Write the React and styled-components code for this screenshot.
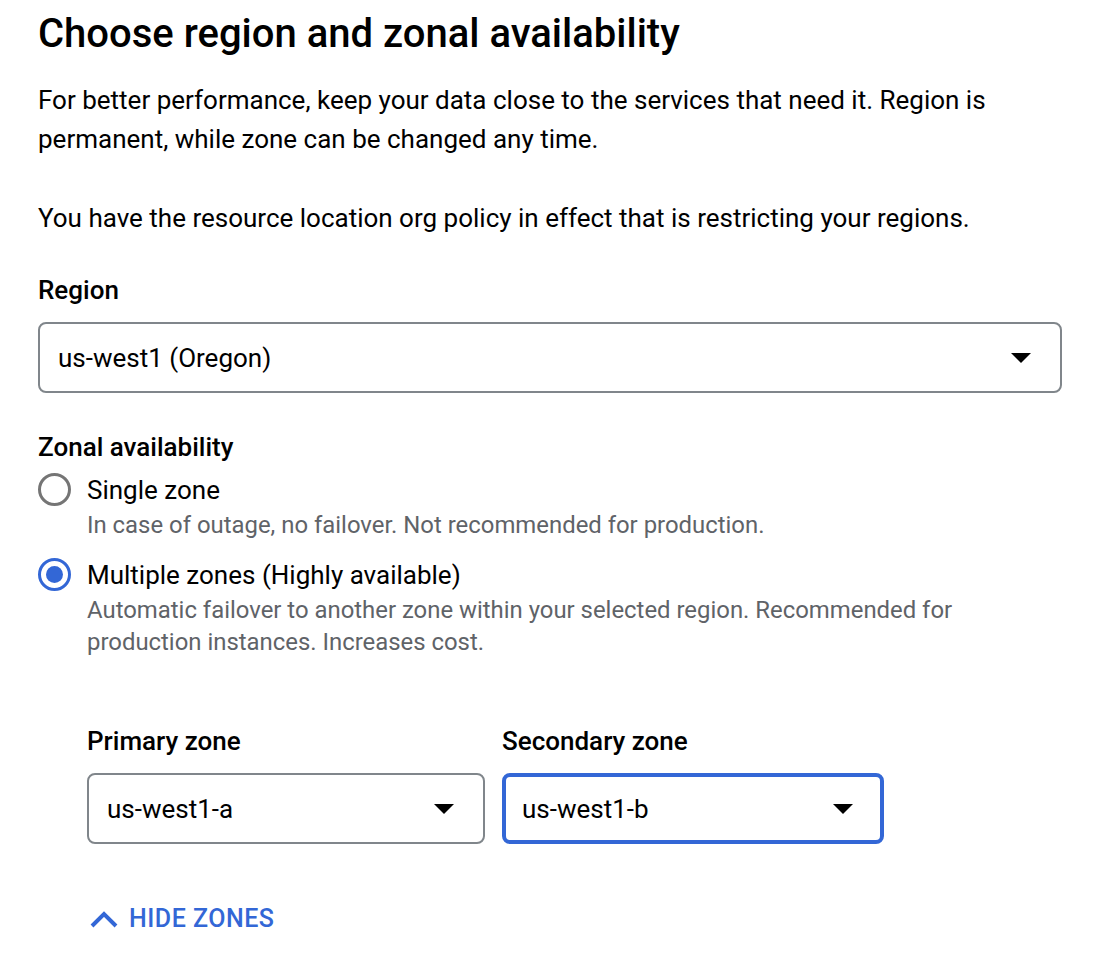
import React from "react";
import styled, { createGlobalStyle } from "styled-components";

const Global = createGlobalStyle`
  html, body { margin: 0; padding: 0; background: #fff; }
  body { font-family: Roboto, "Liberation Sans", Arial, sans-serif; color: #202124; }
  * { box-sizing: border-box; }
`;

const Page = styled.div`
  padding: 8px 46px 0 38px;
  width: 1108px;
`;

const Title = styled.h1`
  margin: 0;
  font-size: 40px;
  line-height: 52px;
  font-weight: 500;
  color: #000;
`;

const Para = styled.p`
  margin: ${(p) => p.$mt || 0}px 0 0;
  font-size: 26px;
  line-height: 39px;
  color: #000;
`;

const Label = styled.div`
  margin-top: ${(p) => p.$mt || 0}px;
  font-size: 26px;
  line-height: 36px;
  font-weight: 500;
  color: #000;
`;

const SelectBox = styled.div`
  margin-top: ${(p) => p.$mt || 0}px;
  height: 71px;
  width: ${(p) => p.$w || "100%"};
  border: ${(p) => (p.$focused ? "4px solid #3367d6" : "2px solid #80868b")};
  border-radius: 8px;
  display: flex;
  align-items: center;
  justify-content: space-between;
  padding: 0 ${(p) => (p.$focused ? 27 : 29)}px 0 ${(p) => (p.$focused ? 16 : 18)}px;
  font-size: 26px;
  color: #000;
`;

const Caret = () => (
  <svg width="20" height="10" viewBox="0 0 20 10">
    <path d="M0 0 L20 0 L10 10 Z" fill="#000" />
  </svg>
);

const RadioRow = styled.div`
  display: grid;
  grid-template-columns: 49px 1fr;
  margin-top: ${(p) => p.$mt || 0}px;
`;

const RadioCircle = styled.span`
  width: 33px;
  height: 33px;
  border-radius: 50%;
  border: 3px solid ${(p) => (p.$checked ? "#3367d6" : "#757575")};
  display: flex;
  align-items: center;
  justify-content: center;
  margin-top: 2px;
  &::after {
    content: "";
    width: 17px;
    height: 17px;
    border-radius: 50%;
    background: ${(p) => (p.$checked ? "#3367d6" : "transparent")};
  }
`;

const RadioLabel = styled.div`
  font-size: 26px;
  line-height: 38px;
  color: #000;
`;

const RadioHint = styled.div`
  font-size: 23.9px;
  line-height: 32px;
  color: #5f6368;
`;

const Zones = styled.div`
  margin: 65px 0 0 49px;
  display: flex;
  gap: 17px;
`;

const ZoneCol = styled.div`
  display: flex;
  flex-direction: column;
`;

const HideButton = styled.button`
  margin: 60px 0 0 52px;
  padding: 0;
  border: 0;
  background: none;
  display: flex;
  align-items: center;
  gap: 11px;
  font-family: inherit;
  font-size: 25px;
  font-weight: 500;
  letter-spacing: 0.5px;
  color: #3367d6;
  cursor: pointer;
`;

export default function App() {
  return (
    <>
      <Global />
      <Page>
        <Title>Choose region and zonal availability</Title>
        <Para $mt={21}>
          For better performance, keep your data close to the services that need it. Region is
          permanent, while zone can be changed any time.
        </Para>
        <Para $mt={40}>
          You have the resource location org policy in effect that is restricting your regions.
        </Para>
        <Label $mt={34}>Region</Label>
        <SelectBox $mt={14}>
          <span>us-west1 (Oregon)</span>
          <Caret />
        </SelectBox>
        <Label $mt={36}>Zonal availability</Label>
        <RadioRow $mt={6}>
          <RadioCircle />
          <div>
            <RadioLabel>Single zone</RadioLabel>
            <RadioHint>In case of outage, no failover. Not recommended for production.</RadioHint>
          </div>
        </RadioRow>
        <RadioRow $mt={15}>
          <RadioCircle $checked />
          <div>
            <RadioLabel>Multiple zones (Highly available)</RadioLabel>
            <RadioHint>
              Automatic failover to another zone within your selected region. Recommended for
              production instances. Increases cost.
            </RadioHint>
          </div>
        </RadioRow>
        <Zones>
          <ZoneCol>
            <Label>Primary zone</Label>
            <SelectBox $mt={14} $w="398px">
              <span>us-west1-a</span>
              <Caret />
            </SelectBox>
          </ZoneCol>
          <ZoneCol>
            <Label>Secondary zone</Label>
            <SelectBox $mt={14} $w="382px" $focused>
              <span>us-west1-b</span>
              <Caret />
            </SelectBox>
          </ZoneCol>
        </Zones>
        <HideButton>
          <svg width="28" height="18" viewBox="0 0 28 18">
            <path d="M2 16 L14 4 L26 16" fill="none" stroke="#3367d6" strokeWidth="4" />
          </svg>
          HIDE ZONES
        </HideButton>
      </Page>
    </>
  );
}
